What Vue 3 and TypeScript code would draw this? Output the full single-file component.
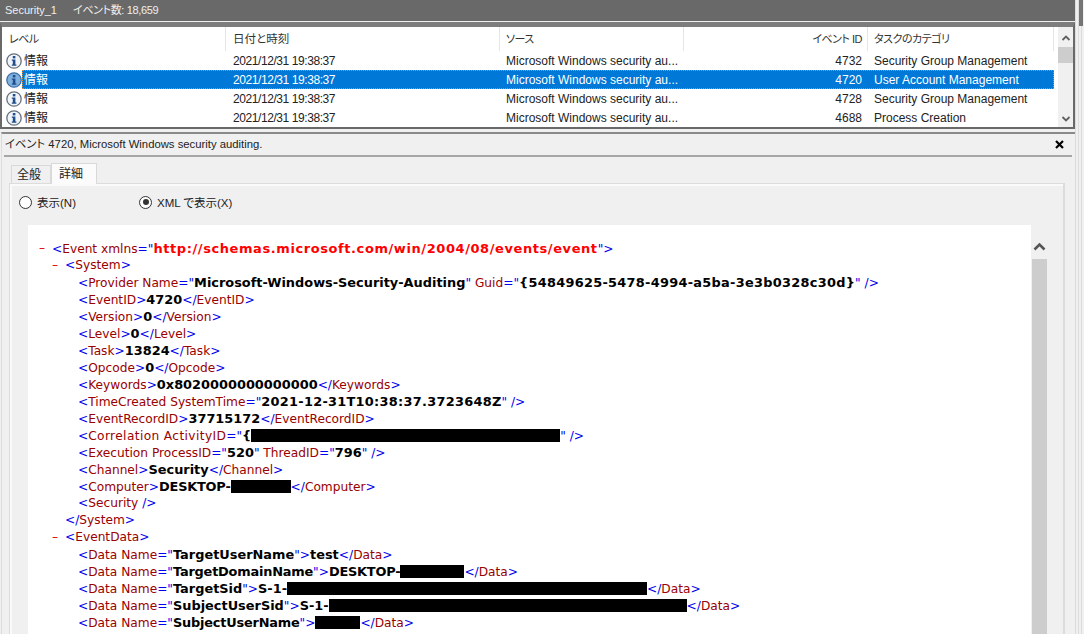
<script setup lang="ts">
interface Row { time: string; source: string; id: string; cat: string; selected?: boolean }
const rows: Row[] = [
  { time: '2021/12/31 19:38:37', source: 'Microsoft Windows security au...', id: '4732', cat: 'Security Group Management' },
  { time: '2021/12/31 19:38:37', source: 'Microsoft Windows security au...', id: '4720', cat: 'User Account Management', selected: true },
  { time: '2021/12/31 19:38:37', source: 'Microsoft Windows security au...', id: '4728', cat: 'Security Group Management' },
  { time: '2021/12/31 19:38:37', source: 'Microsoft Windows security au...', id: '4688', cat: 'Process Creation' },
]
type Seg = { c: 'b' | 'r' | 'rw' | 'k' | 'kn' | 'g' | 'red' | 'x'; t: string; w?: number }
interface Line { i: number; m?: boolean; s: Seg[] }
const el = (i: number, name: string, val: string): Line => ({ i, s: [
  { c: 'b', t: '<' }, { c: 'r', t: name }, { c: 'b', t: '>' }, { c: 'k', t: val },
  { c: 'b', t: '</' }, { c: 'r', t: name }, { c: 'b', t: '>' } ] })
const data = (name: string, rest: Seg[], nameClass: Seg['c'] = 'k'): Line => ({ i: 2, s: [
  { c: 'b', t: '<' }, { c: 'r', t: 'Data Name' }, { c: 'b', t: '="' }, { c: nameClass, t: name }, { c: 'b', t: '">' },
  ...rest, { c: 'b', t: '</' }, { c: 'r', t: 'Data' }, { c: 'b', t: '>' } ] })
const lines: Line[] = [
  { i: 0, m: true, s: [{ c: 'b', t: '<' }, { c: 'r', t: 'Event xmlns' }, { c: 'b', t: '="' }, { c: 'red', t: 'http://schemas.microsoft.com/win/2004/08/events/event' }, { c: 'b', t: '">' }] },
  { i: 1, m: true, s: [{ c: 'b', t: '<' }, { c: 'r', t: 'System' }, { c: 'b', t: '>' }] },
  { i: 2, s: [{ c: 'b', t: '<' }, { c: 'r', t: 'Provider Name' }, { c: 'b', t: '="' }, { c: 'k', t: 'Microsoft-Windows-Security-Auditing' }, { c: 'b', t: '" ' }, { c: 'r', t: 'Guid' }, { c: 'b', t: '="' }, { c: 'g', t: '{54849625-5478-4994-a5ba-3e3b0328c30d}' }, { c: 'b', t: '" />' }] },
  el(2, 'EventID', '4720'), el(2, 'Version', '0'), el(2, 'Level', '0'), el(2, 'Task', '13824'), el(2, 'Opcode', '0'),
  el(2, 'Keywords', '0x8020000000000000'),
  { i: 2, s: [{ c: 'b', t: '<' }, { c: 'r', t: 'TimeCreated SystemTime' }, { c: 'b', t: '="' }, { c: 'g', t: '2021-12-31T10:38:37.3723648Z' }, { c: 'b', t: '" />' }] },
  el(2, 'EventRecordID', '37715172'),
  { i: 2, s: [{ c: 'b', t: '<' }, { c: 'rw', t: 'Correlation ActivityID' }, { c: 'b', t: '="' }, { c: 'k', t: '{' }, { c: 'x', t: '', w: 309 }, { c: 'b', t: '" />' }] },
  { i: 2, s: [{ c: 'b', t: '<' }, { c: 'r', t: 'Execution ProcessID' }, { c: 'b', t: '="' }, { c: 'k', t: '520' }, { c: 'b', t: '" ' }, { c: 'r', t: 'ThreadID' }, { c: 'b', t: '="' }, { c: 'k', t: '796' }, { c: 'b', t: '" />' }] },
  el(2, 'Channel', 'Security'),
  { i: 2, s: [{ c: 'b', t: '<' }, { c: 'r', t: 'Computer' }, { c: 'b', t: '>' }, { c: 'kn', t: 'DESKTOP-' }, { c: 'x', t: '', w: 60 }, { c: 'b', t: '</' }, { c: 'r', t: 'Computer' }, { c: 'b', t: '>' }] },
  { i: 2, s: [{ c: 'b', t: '<' }, { c: 'r', t: 'Security' }, { c: 'b', t: ' />' }] },
  { i: 1, s: [{ c: 'b', t: '</' }, { c: 'r', t: 'System' }, { c: 'b', t: '>' }] },
  { i: 1, m: true, s: [{ c: 'b', t: '<' }, { c: 'r', t: 'EventData' }, { c: 'b', t: '>' }] },
  data('TargetUserName', [{ c: 'k', t: 'test' }]),
  data('TargetDomainName', [{ c: 'kn', t: 'DESKTOP-' }, { c: 'x', t: '', w: 64 }], 'kn'),
  data('TargetSid', [{ c: 'k', t: 'S-1-' }, { c: 'x', t: '', w: 360 }]),
  data('SubjectUserSid', [{ c: 'k', t: 'S-1-' }, { c: 'x', t: '', w: 358 }]),
  data('SubjectUserName', [{ c: 'x', t: '', w: 45 }], 'kn'),
]
</script>

<template>
  <div class="app">
    <div class="main">
      <div class="titlebar">
        <span>Security_1</span><span class="count">イベント数: 18,659</span>
      </div>
      <div class="list">
        <div class="list-main">
          <div class="thead">
            <div class="th c1">レベル</div>
            <div class="th c2">日付と時刻</div>
            <div class="th c3">ソース</div>
            <div class="th c4">イベント ID</div>
            <div class="th c5">タスクのカテゴリ</div>
          </div>
          <div v-for="(r, n) in rows" :key="n" class="tr" :class="{ sel: r.selected }">
            <svg class="info" width="16" height="16" viewBox="0 0 16 16">
              <circle cx="8" cy="8" r="7.200" :fill="r.selected ? '#7fb0de' : '#f1f4f9'" :stroke="r.selected ? '#3d6fa3' : '#67717d'" stroke-width="1.300" />
              <path d="M5.800 6.400h3.600v5.100h1v1.300H5.800v-1.300h1V7.700h-1z" fill="#1f4e8c" />
              <rect x="6.800" y="3" width="2.600" height="2.400" fill="#1f4e8c" />
            </svg>
            <div class="cells">
              <div class="td c1">情報</div>
              <div class="td c2 time">{{ r.time }}</div>
              <div class="td c3">{{ r.source }}</div>
              <div class="td c4">{{ r.id }}</div>
              <div class="td c5">{{ r.cat }}</div>
            </div>
          </div>
        </div>
        <div class="sb">
          <svg width="10" height="6" viewBox="0 0 10 6"><path d="M1.500 5 5 1.500 8.500 5" fill="none" stroke="#606060" stroke-width="1.800" /></svg>
          <div class="thumb"></div>
          <div class="sb-space"></div>
          <svg width="10" height="6" viewBox="0 0 10 6"><path d="M1.500 1 5 4.500 8.500 1" fill="none" stroke="#606060" stroke-width="1.800" /></svg>
        </div>
      </div>
      <div class="pane">
        <div class="pane-head">
          <span class="head-text">イベント 4720, Microsoft Windows security auditing.</span>
          <svg class="close" width="9" height="9" viewBox="0 0 9 9"><path d="M1 1l7 7M8 1l-7 7" stroke="#000" stroke-width="2.200" /></svg>
        </div>
        <div class="tabs">
          <div class="tab">全般</div>
          <div class="tab active">詳細</div>
        </div>
        <div class="tab-body">
          <div class="radios">
            <label class="radio r1"><span class="dot"></span>表示(N)</label>
            <label class="radio"><span class="dot checked"></span>XML で表示(X)</label>
          </div>
          <div class="xml-wrap">
            <div class="xml">
              <div v-for="(l, n) in lines" :key="n" class="line" :class="'ind' + l.i">
                <span v-if="l.m" class="minus">–</span>
                <template v-for="(s, k) in l.s" :key="k">
                  <span v-if="s.c === 'x'" class="redact" :style="{ width: s.w + 'px' }"></span>
                  <span v-else :class="s.c">{{ s.t }}</span>
                </template>
              </div>
            </div>
            <div class="xml-sb">
              <svg width="13" height="10" viewBox="0 0 13 10"><path d="M1.500 8.500 6.500 3.500 11.500 8.500" fill="none" stroke="#555" stroke-width="2.600" /></svg>
              <div class="xml-track"></div>
            </div>
          </div>
        </div>
      </div>
    </div>
    <div class="edge"></div>
  </div>
</template>

<style>
html, body { margin: 0; padding: 0; background: #f0f0f0; overflow: hidden; }
</style>

<style scoped>
.app {
  width: 1084px; height: 634px; overflow: hidden; display: flex;
  font-family: "Liberation Sans", "Noto Sans CJK JP", sans-serif; font-size: 12px; color: #222; background: #f0f0f0;
  font-feature-settings: "palt";
}
.main { width: 1075px; flex: none; display: flex; flex-direction: column; }
.edge {
  flex: 1; position: relative;
  background: linear-gradient(90deg, #dcdcdc 0 1px, #f0f0f0 1px 3px, #dcdcdc 3px 4px, #f0f0f0 4px 6px, #dcdcdc 6px 7px, #f0f0f0 7px);
}
.edge::before { content: ""; position: absolute; left: 4px; top: 0; width: 4px; height: 26px; background: #757575; }
.titlebar {
  height: 21px; flex: none; background: #696969; color: #efefef; padding-left: 5px; box-sizing: border-box;
  font-size: 11px; line-height: 20px; display: flex; gap: 16px; margin-right: -3px;
}
.count { letter-spacing: -0.35px; }
.list {
  flex: none; height: 100px; margin-top: 1px; display: flex; background: #fff;
  border: 2px solid #696969; border-top: 5px solid #7d7d7d;
}
.list-main { width: 1052px; flex: none; }
.thead { display: flex; height: 24px; }
.th { height: 24px; line-height: 24px; box-sizing: border-box; border-right: 1px solid #e5e5e5; color: #333; white-space: nowrap; font-size: 11px; letter-spacing: -0.5px; }
.th.c2 { font-size: 11.500px; letter-spacing: 0; }
.c1 { width: 224px; padding-left: 7px; box-sizing: border-box; }
.c2 { width: 274px; padding-left: 7px; box-sizing: border-box; }
.c3 { width: 184px; padding-left: 6px; box-sizing: border-box; }
.c4 { width: 184px; padding-right: 5px; text-align: right; box-sizing: border-box; }
.c5 { width: 186px; padding-left: 6px; box-sizing: border-box; }
.tr { height: 19px; display: flex; align-items: center; }
.info { flex: none; margin-left: 4px; }
.cells { width: 1032px; flex: none; display: flex; height: 19px; line-height: 20px; box-sizing: border-box; }
.td { white-space: nowrap; color: #222; height: 19px; }
.cells .c1 { width: 204px; padding-left: 2px; }
.cells .c4 { padding-right: 6px; }
.time { letter-spacing: -0.42px; }
.tr.sel .cells { background: #0078d7; outline: 1px dotted #e08a2e; outline-offset: -1px; }
.tr.sel .td { color: #fff; }
.sb {
  width: 15px; margin-left: 4px; flex: none; display: flex; flex-direction: column; align-items: center;
  background: #f0f0f0; padding: 8px 0 5px; box-sizing: border-box;
}
.sb svg { flex: none; }
.thumb { width: 15px; height: 16px; background: #cdcdcd; margin-top: 6px; flex: none; }
.sb-space { flex: 1; }
.pane {
  flex: 1; min-height: 0; margin: 3px 0 0 1px; border-top: 2px solid #8a8a8a; border-left: 1px solid #dcdcdc;
  display: flex; flex-direction: column;
}
.pane-head {
  flex: none; height: 21px; display: flex; justify-content: space-between; align-items: center; padding: 0 8px 0 1px;
  margin: 0 3px 0 2px; border-bottom: 2px solid #a6a6a6; box-sizing: content-box; font-size: 11.300px;
}
.head-text { margin-bottom: 4px; }
.close { flex: none; }
.tabs { flex: none; display: flex; align-items: flex-end; height: 26px; padding-left: 9px; box-sizing: border-box; }
.tab {
  height: 18px; line-height: 18px; width: 40px; padding-left: 5px; background: #f0f0f0; border: 1px solid #d9d9d9; border-bottom: 0; box-sizing: border-box;
}
.tab.active { height: 21px; width: 46px; padding-left: 7px; background: #fbfbfb; margin-bottom: -1px; position: relative; line-height: 20px; }
.tab-body {
  flex: 1; min-height: 0; margin: 0 10px 0 7px; border: 2px solid #dcdcdc; border-width: 1px 2px 0 1px;
  box-shadow: inset 2px 2px 0 #fafafa; display: flex; flex-direction: column;
}
.radios { flex: none; height: 41px; display: flex; padding: 9px 0 0 9px; box-sizing: border-box; font-size: 11.500px; }
.radio { display: flex; align-items: center; height: 18px; gap: 5px; }
.r1 { width: 120px; }
.dot { width: 13px; height: 13px; border: 1px solid #333; border-radius: 50%; background: #fff; box-sizing: border-box; position: relative; flex: none; }
.dot.checked::after { content: ""; position: absolute; left: 2.500px; top: 2.500px; width: 6px; height: 6px; border-radius: 50%; background: #333; }
.xml-wrap { flex: 1; min-height: 0; display: flex; padding-left: 18px; }
.xml {
  width: 1003px; flex: none; background: #fff; padding: 15px 0 0 0; box-sizing: border-box; overflow: hidden;
  font-family: "DejaVu Sans", Verdana, sans-serif; font-size: 12.200px; line-height: 17px; white-space: pre; font-feature-settings: normal;
}
.line { height: 17px; position: relative; }
.ind0 { padding-left: 24px; } .ind1 { padding-left: 37px; } .ind2 { padding-left: 50px; }
.minus { position: absolute; margin-left: -13px; color: #e00000; }
.b { color: #0000f0; } .r, .rw { color: #990000; }
.rw { letter-spacing: 0.38px; }
.k, .kn, .g { color: #000; font-weight: 700; font-size: 12.900px; }
.kn { letter-spacing: -0.2px; }
.g { letter-spacing: 0.28px; }
.red { color: #f00; font-weight: 700; font-size: 13px; letter-spacing: 0.58px; }
.redact { display: inline-block; height: 13px; background: #000; vertical-align: -2px; }
.xml-sb { flex: none; width: 15px; margin-left: 1px; display: flex; flex-direction: column; align-items: center; padding-top: 16px; box-sizing: border-box; }
.xml-sb svg { flex: none; }
.xml-track { flex: 1; width: 15px; background: #cdcdcd; margin-top: 8px; }
</style>
